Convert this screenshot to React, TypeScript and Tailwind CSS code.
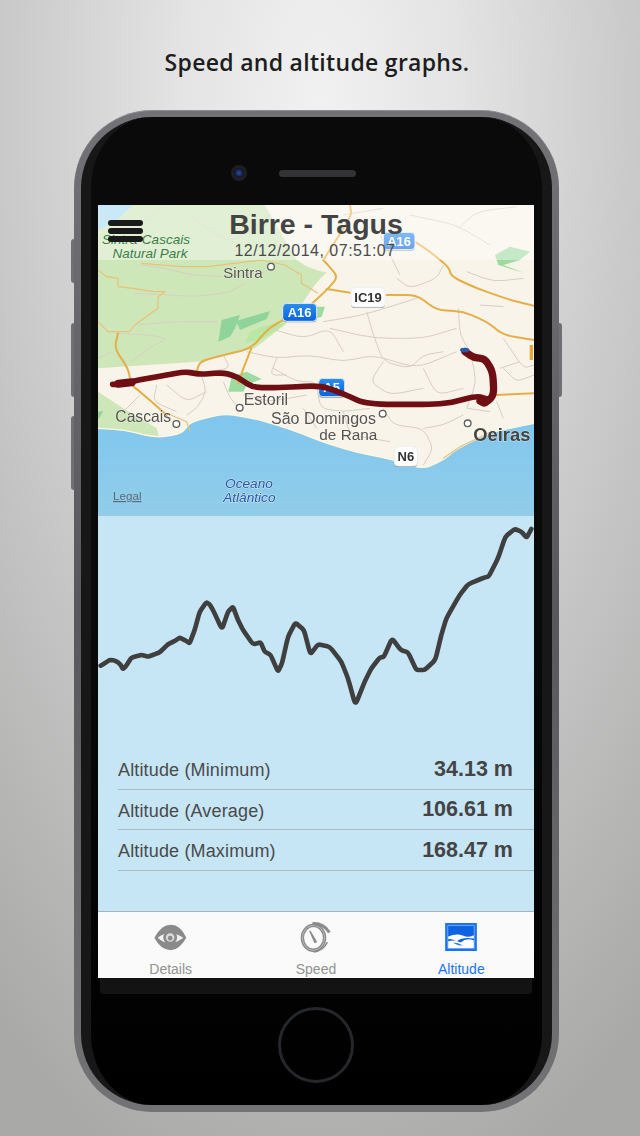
import React from "react";

const chart = "8,452 20,445 35,435 48,436 60,442 68,450 75,462 85,452 100,428 115,424 130,420 150,425 170,418 185,412 210,388 230,378 245,368 260,375 275,385 290,345 305,290 325,262 335,268 345,285 372,343 390,290 405,275 420,315 435,345 465,388 488,382 500,410 518,420 540,470 552,445 570,365 592,323 618,345 637,418 660,388 695,395 730,440 750,490 772,570 800,500 820,460 845,428 858,425 882,370 908,405 930,412 955,465 980,465 1012,435 1030,360 1045,310 1085,240 1110,208 1160,187 1172,185 1200,130 1222,65 1250,42 1270,50 1286,68 1300,42";

function smooth(d: string, t = 0.35): string {
  const parts = d.split("M").filter(Boolean);
  return parts
    .map((part) => {
      const pts = part.trim().split(/\s*L\s*/).map((p) => p.split(",").map(Number));
      if (pts.length < 3) return "M" + pts.map((p) => p.join(",")).join(" L");
      let out = `M${pts[0][0]},${pts[0][1]}`;
      for (let i = 1; i < pts.length - 1; i++) {
        const [px, py] = pts[i - 1];
        const [x, y] = pts[i];
        const [nx, ny] = pts[i + 1];
        out += ` L${x - (x - px) * t},${y - (y - py) * t} Q${x},${y} ${x + (nx - x) * t},${y + (ny - y) * t}`;
      }
      const last = pts[pts.length - 1];
      return out + ` L${last[0]},${last[1]}`;
    })
    .join(" ");
}

const chartPath = smooth("M" + chart.split(" ").join(" L "), 0.2);

const greyRoads = [
  "M24,60 L130,100 L225,30",
  "M154,210 L224,220 L304,240 L404,245 L464,240 L530,230",
  "M134,295 L234,300 L324,305 L424,290 L464,265",
  "M144,390 L244,380 L384,380",
  "M74,415 L174,420 L234,430 L184,455 L124,500",
  "M64,470 L24,490",
  "M300,60 L420,150 L540,60",
  "M470,470 L560,490 L660,480 L760,500 L850,480 L980,520 L1100,470",
  "M830,350 L850,420 L880,500 L960,520 L1000,480 L1060,470",
  "M700,380 L820,360 L980,310",
  "M1105,340 L1110,420 L1140,470 L1160,560 L1130,640",
  "M330,530 L350,590 L320,640 L290,660",
  "M200,570 L190,620 L260,650 M230,570 L290,620 L350,590",
  "M550,520 L620,560 L680,560 L690,640 L760,650 L840,640",
  "M460,600 L540,620 L650,600 M400,560 L420,610 L450,640",
  "M880,640 L910,690 L1000,700 L1030,760 L1000,810",
  "M1120,660 L1060,690 L1000,700 M1220,620 L1240,670 M1132,640 L1200,650",
  "M760,650 L780,720 L900,740 M640,640 L680,700",
  "M920,250 L960,280 L1040,250 L1060,210 M870,120 L930,240",
  "M1105,100 L1160,50 L1280,35 M1130,230 L1210,260 L1300,250 M1170,330 L1240,335",
  "M1240,430 L1300,520 L1332,510 M1230,520 L1290,500",
  "M400,480 L420,520 L350,530 M150,600 L100,650",
  "M720,400 L850,430 L1000,430 L1100,400",
  "M540,400 L640,430 L720,400 L760,470",
  "M560,490 L540,540 L590,540",
  "M1000,520 L1040,600 L1120,580",
  "M880,500 L840,560 L900,600 L1000,580",
  "M1240,520 L1280,560 L1332,540",
  "M760,60 L880,40 M960,60 L1100,90 L1200,150",
];

const orangeRoads = [
  "M1332,332 L1260,315 L1160,280 L1085,245 L1075,215 L1020,170 L960,130",
  "M890,300 L980,300 L1040,345 L1120,350 L1190,380 L1240,420 L1332,435",
  "M710,282 L790,295",
  "M700,195 L745,245 L710,285 L650,340 L540,395 L484,460 L400,480 L330,500 L320,530",
  "M484,460 L460,520 L445,565",
  "M84,415 L74,460 L114,520 L124,570 L150,590 L230,660",
  "M1220,600 L1332,595",
  "M780,30 L785,62 L700,195",
];

const thinOrange = [
  "M24,225 L50,245 L84,250 L84,275 L130,280 L190,290 L225,290 L204,305 L204,340 L134,390 L119,410 L54,410 L24,380",
  "M154,205 L274,215 L354,215 L514,195 L584,210 L634,240 L634,265 L684,295",
  "M1060,790 L1110,755 L1200,712",
  "M230,655 L290,680 L300,710",
];

function Shield({ x, y, w, h, label, blue, fs = 39 }: { x: number; y: number; w: number; h: number; label: string; blue?: boolean; fs?: number }) {
  return (
    <g>
      <rect x={x} y={y + 3} width={w} height={h} rx={12} fill="#858a8e" />
      <rect x={x} y={y} width={w} height={h} rx={12} fill={blue ? "url(#shieldBlue)" : "#ffffff"} stroke="#eef0f2" strokeWidth={3} />
      <text x={x + w / 2} y={y + h / 2 + fs * 0.35} textAnchor="middle" fontSize={fs} fontWeight={700} fontFamily="'Liberation Sans', sans-serif" fill={blue ? "#ffffff" : "#333333"}>{label}</text>
    </g>
  );
}

function Label({ x, y, size, children, fill = "#55534f", italic, anchor, weight }: { x: number; y: number; size: number; children: string; fill?: string; italic?: boolean; anchor?: "middle"; weight?: number }) {
  return (
    <text x={x} y={y} fontSize={size} fill={fill} fontWeight={weight} fontStyle={italic ? "italic" : "normal"} textAnchor={anchor} fontFamily="'Liberation Sans', sans-serif" stroke="#ffffff" strokeOpacity={0.55} strokeWidth={3} style={{ paintOrder: "stroke" }}>{children}</text>
  );
}

function Poi({ x, y }: { x: number; y: number }) {
  return <circle cx={x} cy={y} r={10} fill="#ffffff" stroke="#5b5b58" strokeWidth={4} />;
}

function MapDrawing() {
  const coast = "M24,700 L100,705 L200,728 L275,716 L300,682 L400,655 L500,672 L600,702 L700,742 L800,772 L900,792 L1000,822 L1060,795 L1100,762 L1200,712 L1332,685";
  return (
    <svg viewBox="24 30 1308 933" className="block h-[311px] w-[436px] blur-[0.35px]">
      <defs>
        <linearGradient id="sea" x1="0" y1="0" x2="0" y2="1">
          <stop offset="0" stopColor="#7fc6ee" />
          <stop offset="1" stopColor="#92cdea" />
        </linearGradient>
        <linearGradient id="shieldBlue" x1="0" y1="0" x2="0" y2="1">
          <stop offset="0" stopColor="#2b8ff2" />
          <stop offset="1" stopColor="#0a62dc" />
        </linearGradient>
      </defs>
      <rect x="24" y="30" width="1308" height="933" fill="#f8f4e9" />
      <path d="M524,30 L620,195 Q660,225 710,232 Q690,250 674,270 L640,320 L584,390 L494,460 L324,500 L24,520 L24,30 Z" fill="#cee7b9" />
      <path d="M24,30 L129,30 L75,80 L24,105 Z" fill="#a5daf4" />
      <path d="M24,590 L100,640 L200,700 L208,730 L24,705 Z" fill="#cee7b9" />
      <path d="M385,440 L395,375 L450,360 L435,400 L420,425 Z" fill="#8fd49a" />
      <path d="M438,378 L540,348 L530,372 L450,405 Z" fill="#8fd49a" />
      <path d="M465,445 L480,410 L530,390 L590,385 L520,430 Z" fill="#b8e8a4" />
      <path d="M415,590 L425,545 L470,530 L515,552 L470,570 L460,590 Z" fill="#9edba0" />
      <path d="M680,335 L705,335 L695,365 L680,370 Z" fill="#9edba0" />
      <path d="M1215,180 L1260,155 L1320,170 L1290,195 L1240,210 L1305,235 L1225,210 Z" fill="#9edba0" />
      <path d="M24,650 L40,648 L28,670 L24,670 Z" fill="#8fd49a" />
      <path d={smooth(coast) + " L1332,963 L24,963 Z"} fill="url(#sea)" />
      <path d={smooth(coast)} fill="none" stroke="#fff8e0" strokeWidth={4} />
      {greyRoads.map((d) => <path key={d} d={smooth(d)} fill="none" stroke="#d6d0c3" strokeWidth={3} strokeLinejoin="round" />)}
      {thinOrange.map((d) => <path key={d} d={d} fill="none" stroke="#e6c27a" strokeWidth={3.5} strokeLinejoin="round" />)}
      {orangeRoads.map((d) => <path key={d} d={smooth(d)} fill="none" stroke="#e6ae47" strokeWidth={6} strokeLinejoin="round" strokeLinecap="round" />)}
      <path d="M1324,450 L1324,495" stroke="#e6a93c" strokeWidth={10} />
      <Shield x={880} y={112} w={95} h={52} label="A16" blue />
      <Shield x={578} y={325} w={102} h={54} label="A16" blue />
      <Shield x={783} y={278} w={102} h={58} label="IC19" />
      <Shield x={686} y={550} w={78} h={55} label="A5" blue />
      <Shield x={913} y={755} w={69} h={58} label="N6" />
      <Label x={400} y={248} size={45}>Sintra</Label>
      <Poi x={543} y={215} />
      <Label x={76} y={680} size={47}>Cascais</Label>
      <Poi x={259} y={687} />
      <Label x={461} y={630} size={48}>Estoril</Label>
      <Poi x={449} y={638} />
      <Label x={543} y={688} size={48}>São Domingos</Label>
      <Label x={688} y={736} size={46}>de Rana</Label>
      <Poi x={878} y={656} />
      <Label x={1150} y={737} size={55} weight={700} fill="#45433f">Oeiras</Label>
      <Poi x={1133} y={685} />
      <Label x={477} y={880} size={41} fill="#2a55a5" italic anchor="middle">Oceano</Label>
      <Label x={478} y={921} size={41} fill="#2a55a5" italic anchor="middle">Atlântico</Label>
      <text x={69} y={915} fontSize={35} fill="#5d6a72" textDecoration="underline" fontFamily="'Liberation Sans', sans-serif">Legal</text>
      <path d={smooth("M68,568 L100,568 L130,558 L200,545 L285,530 L330,538 L400,533 L440,545 L490,578 L560,578 L690,572 L750,592 L830,628 L1060,628 L1160,603 L1190,612")} fill="none" stroke="#6f0f14" strokeWidth={17} strokeLinejoin="round" strokeLinecap="round" />
      <path d="M85,566 L125,562" stroke="#6f0f14" strokeWidth={24} strokeLinecap="round" />
      <path d={smooth("M1170,618 L1185,626 L1212,600 L1208,530 L1185,492 L1150,487 L1125,470")} fill="none" stroke="#6f0f14" strokeWidth={22} strokeLinejoin="round" strokeLinecap="round" />
      <ellipse cx={1124} cy={465} rx={14} ry={7} fill="#2e56a8" />
    </svg>
  );
}

function EyeIcon() {
  return (
    <svg viewBox="195 70 98 82" className="h-[27px] w-[33px]">
      <path d="M195,112 Q215,72 245,72 Q275,72 292,112 Q270,150 245,150 Q215,150 195,112 Z" fill="#8a8a8a" />
      <path d="M205,112 Q240,82 283,112 Q240,144 205,112 Z" fill="#f2f2f2" />
      <circle cx={243} cy={111} r={21} fill="#8a8a8a" />
      <circle cx={243} cy={111} r={13} fill="#dcdcdc" />
      <circle cx={243} cy={113} r={7} fill="#8a8a8a" />
    </svg>
  );
}

function SpeedIcon() {
  return (
    <svg viewBox="625 65 92 92" className="h-[31px] w-[31px]">
      <ellipse cx={665} cy={112} rx={33} ry={37} fill="none" stroke="#8a8a8a" strokeWidth={10} />
      <ellipse cx={665} cy={112} rx={33} ry={37} fill="none" stroke="#cfcfcf" strokeWidth={2} />
      <path d="M662,70 Q695,68 712,96" fill="none" stroke="#8a8a8a" strokeWidth={9} />
      <path d="M706,125 Q695,150 665,154" fill="none" stroke="#8a8a8a" strokeWidth={5} />
      <path d="M652,92 L656,90 L676,124 L668,128 Z" fill="#8a8a8a" />
    </svg>
  );
}

function AltitudeIcon() {
  return (
    <svg viewBox="1066 70 94 83" className="h-[28px] w-[32px]">
      <rect x={1066} y={70} width={94} height={83} fill="#1a73f5" />
      <rect x={1074} y={78} width={78} height={67} fill="#0f62e0" stroke="#9cc4fb" strokeWidth={2} />
      <path d="M1075,110 Q1100,100 1120,108 Q1135,114 1151,106 L1151,116 Q1120,110 1100,124 Q1085,116 1075,118 Z" fill="#ffffff" />
      <path d="M1075,124 Q1095,118 1112,128 Q1130,112 1151,122 L1151,144 L1075,144 Z" fill="#ffffff" />
      <path d="M1090,128 Q1105,128 1118,136 Q1100,138 1090,128 Z" fill="#2d80f5" />
    </svg>
  );
}

function StatRow({ label, value }: { label: string; value: string }) {
  return (
    <div className="flex h-[40.5px] items-center justify-between border-b border-[#a9bcc6] pr-[21px]">
      <span className="relative top-[2px] text-[18px] tracking-[0.15px] text-[#4a4a4a]">{label}</span>
      <span className="text-[21.5px] font-bold text-[#444444]">{value}</span>
    </div>
  );
}

function Tab({ label, active, children }: { label: string; active?: boolean; children: React.ReactNode }) {
  return (
    <div className="flex flex-col items-center">
      <div className="mt-[8px] flex h-[34px] items-center justify-center">{children}</div>
      <span className={`mt-[7px] text-[14px] leading-[16px] ${active ? "text-[#1a73f5]" : "text-[#929292]"}`}>{label}</span>
    </div>
  );
}

export default function App() {
  return (
    <div className="flex h-[1136px] w-[640px] flex-col overflow-hidden bg-[radial-gradient(ellipse_85%_100%_at_50%_9%,#f1f1f1_0%,#e4e4e4_25%,#cccccc_55%,#a9a9a8_100%)] font-['Liberation_Sans',sans-serif]">
      <h1 className="mt-[46px] h-[32px] pr-[6px] text-center font-['Open_Sans',sans-serif] text-[23px] font-semibold leading-[32px] tracking-[0.3px] text-[#1d1d1d]">Speed and altitude graphs.</h1>

      <div className="relative ml-[74px] mt-[32px] h-[1002px] w-[485px] rounded-[78px] border-t border-t-[#8d8d91] bg-[linear-gradient(180deg,#737377_0%,#58585c_50%,#737376_100%)] p-[7px] pt-[6px]">
        <div className="absolute left-[-3px] top-[128px] h-[44px] w-[3px] rounded-l bg-[#6f6f74]" />
        <div className="absolute left-[-3px] top-[212px] h-[74px] w-[3px] rounded-l bg-[#6f6f74]" />
        <div className="absolute left-[-3px] top-[305px] h-[74px] w-[3px] rounded-l bg-[#6f6f74]" />
        <div className="absolute right-[-3px] top-[212px] h-[74px] w-[3px] rounded-r bg-[#6f6f74]" />

        <div className="flex h-full flex-col items-center rounded-[71px] border-x-[10px] border-x-[#171717] bg-[linear-gradient(180deg,#0a0a0a_0%,#0a0a0a_50%,#000000_100%)] pr-[1px]">
          <div className="flex h-[88px] w-full shrink-0 items-center justify-center">
            <div className="relative left-[-23px] top-[12px] flex items-center gap-[32px]">
              <div className="h-[16px] w-[16px] rounded-full border-[3px] border-[#1f1f22] bg-[radial-gradient(circle,#2a4fa0_0%,#101a38_60%,#0a0a0a_100%)]" />
              <div className="h-[7px] w-[77px] rounded-full bg-[#333335]" />
            </div>
          </div>

          <div className="w-[436px] shrink-0">
            <div className="relative h-[311px] overflow-hidden">
              <MapDrawing />
              <div className="absolute inset-x-0 top-0 h-[55px] bg-white/40" />
              <div className="absolute left-[4px] top-[28px] w-[88px] text-center text-[13.5px] italic leading-[13.5px] text-[#3a7f48]">
                <div>Sintra-Cascais</div>
                <div className="pl-[8px]">Natural Park</div>
              </div>
              <div className="absolute left-[10px] top-[15px] flex w-[35px] flex-col gap-[2px]">
                <div className="h-[6px] rounded-full bg-[#1a1a1a]" />
                <div className="h-[6px] rounded-full bg-[#1a1a1a]" />
                <div className="h-[6px] rounded-full bg-[#1a1a1a]" />
              </div>
              <div className="absolute inset-x-0 top-[1px] text-center text-[28.5px] font-bold leading-[36px] text-[#444444]">Birre - Tagus</div>
              <div className="absolute inset-x-0 top-[36px] pr-[2px] text-center text-[16px] leading-[20px] tracking-[0.5px] text-[#4a4a4a]">12/12/2014, 07:51:07</div>
            </div>

            <div className="h-[395px] bg-[#c6e6f6]">
              <svg viewBox="0 3 1308 600" className="block h-[200px] w-[436px]">
                <path d={chartPath} fill="none" stroke="#3f3f3f" strokeWidth={14} strokeLinejoin="round" strokeLinecap="round" />
              </svg>
              <div className="mt-[33px] pl-[20px]">
                <StatRow label="Altitude (Minimum)" value="34.13 m" />
                <StatRow label="Altitude (Average)" value="106.61 m" />
                <StatRow label="Altitude (Maximum)" value="168.47 m" />
              </div>
            </div>

            <div className="grid h-[67px] grid-cols-3 border-t border-[#a5b4bc] bg-[#fafafa]">
              <Tab label="Details"><EyeIcon /></Tab>
              <Tab label="Speed"><SpeedIcon /></Tab>
              <Tab label="Altitude" active><AltitudeIcon /></Tab>
            </div>
          </div>

          <div className="h-[16px] w-[432px] shrink-0 rounded-b-[3px] bg-[#131313]" />
          <div className="mt-[13px] h-[76px] w-[76px] shrink-0 rounded-full border-[3px] border-[#25272b]" />
        </div>
      </div>
    </div>
  );
}
